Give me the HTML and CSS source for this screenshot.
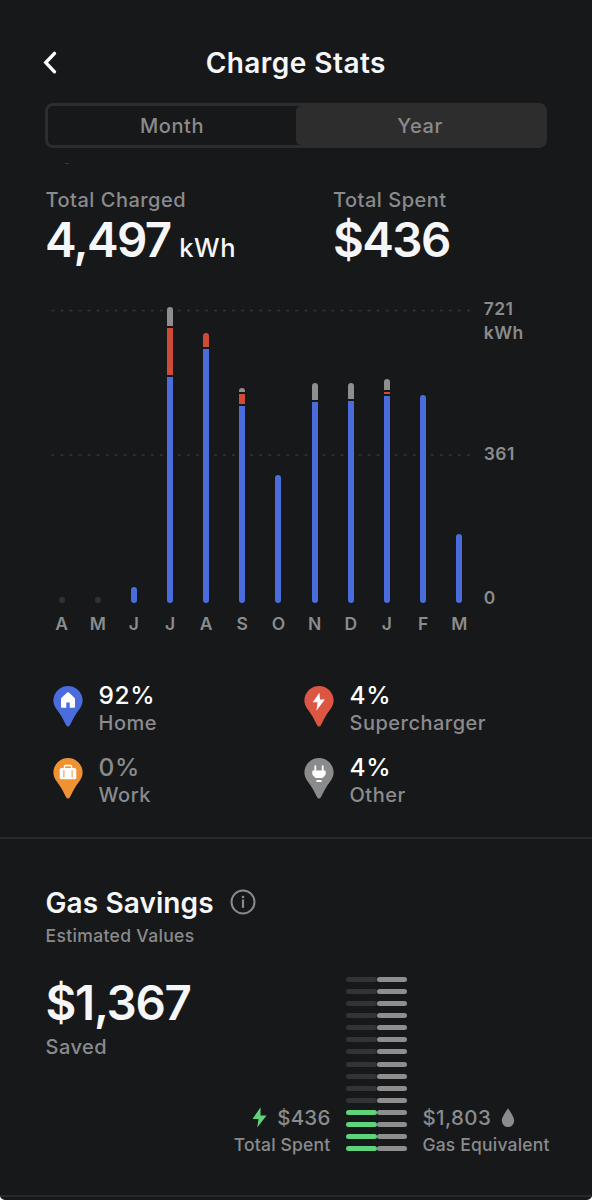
FILE: index.html
```html
<!DOCTYPE html>
<html lang="en">
<head>
<meta charset="utf-8">
<title>Charge Stats</title>
<link rel="stylesheet" href="styles.css">
</head>
<body>
<main class="screen">
  <header class="header">
    <svg class="back" width="16" height="26" viewBox="0 0 16 26"><path d="M12.5 3.400 3.800 12.600l8.700 9.200" fill="none" stroke="#fff" stroke-width="3.4" stroke-linecap="round" stroke-linejoin="miter"/></svg>
    <h1 class="title">Charge Stats</h1>
  </header>

  <nav class="segments">
    <span class="segment">Month</span>
    <span class="segment segment-active">Year</span>
  </nav>
  <div class="tick"></div>

  <section class="totals">
    <div class="total">
      <div class="label">Total Charged</div>
      <div class="value charged">4,497<span class="unit">kWh</span></div>
    </div>
    <div class="total">
      <div class="label spent-label">Total Spent</div>
      <div class="value spent">$436</div>
    </div>
  </section>

  <section class="chart">
    <div class="plot">
      <svg class="gridlines" width="422" height="150" viewBox="0 0 422 150"><path d="M.4 3.5H420M.4 148H420" stroke="#333436" stroke-width="1.6" stroke-dasharray="3 6.033"/></svg>
      <div class="bars">
        <div class="bar"><i class="dot"></i></div>
        <div class="bar"><i class="dot"></i></div>
        <div class="bar"><i class="home" style="height:16px"></i></div>
        <div class="bar"><i class="other" style="height:19px"></i><i class="super" style="height:47px"></i><i class="home" style="height:226px"></i></div>
        <div class="bar"><i class="super" style="height:14px"></i><i class="home" style="height:254px"></i></div>
        <div class="bar"><i class="other" style="height:3.5px"></i><i class="super" style="height:10.5px"></i><i class="home" style="height:197px"></i></div>
        <div class="bar"><i class="home" style="height:128.5px"></i></div>
        <div class="bar"><i class="other" style="height:17px"></i><i class="home" style="height:201px"></i></div>
        <div class="bar"><i class="other" style="height:16px"></i><i class="home" style="height:202px"></i></div>
        <div class="bar"><i class="other" style="height:10.5px"></i><i class="super" style="height:2px"></i><i class="home" style="height:207.5px"></i></div>
        <div class="bar"><i class="home" style="height:208px"></i></div>
        <div class="bar"><i class="home" style="height:69.5px"></i></div>
      </div>
      <div class="months">
        <span>A</span><span>M</span><span>J</span><span>J</span><span>A</span><span>S</span><span>O</span><span>N</span><span>D</span><span>J</span><span>F</span><span>M</span>
      </div>
    </div>
    <div class="axis">
      <span class="axis-max">721<br>kWh</span>
      <span class="axis-mid">361</span>
      <span class="axis-min">0</span>
    </div>
  </section>

  <section class="legend">
    <div class="entry">
      <svg class="pin" width="30" height="41" viewBox="0 0 30 41"><path d="M15 0a14.6 14.6 0 0 0-14.6 14.6c0 6.3 4.6 10 7.8 15.4 2.1 3.500 3.600 6.700 4.800 9.100q.7 1.500 2 1.500t2-1.500c1.200-2.400 2.700-5.600 4.800-9.100 3.200-5.400 7.800-9.100 7.800-15.400A14.600 14.600 0 0 0 15 0z" fill="#4a6cdc"/><path d="M14.100 6.600q.9-.8 1.800 0l5.500 5.100q.6.600.6 1.400v8q0 .7-.7.700h-4.600v-5.200h-3.400v5.200h-4.600q-.7 0-.7-.7v-8q0-.8.600-1.400z" fill="#fff"/></svg>
      <div><div class="percent">92%</div><div class="label">Home</div></div>
    </div>
    <div class="entry">
      <svg class="pin" width="30" height="41" viewBox="0 0 30 41"><path d="M15 0a14.6 14.6 0 0 0-14.6 14.6c0 6.3 4.6 10 7.8 15.4 2.1 3.500 3.600 6.700 4.800 9.100q.7 1.500 2 1.500t2-1.500c1.200-2.400 2.700-5.600 4.800-9.100 3.200-5.400 7.800-9.100 7.800-15.400A14.600 14.600 0 0 0 15 0z" fill="#dd5643"/><path d="M15.400 6.700 8.700 16.300h4.900l-1.300 8.500 8.600-11.200h-4.900z" fill="#fff"/></svg>
      <div><div class="percent">4%</div><div class="label supercharger">Supercharger</div></div>
    </div>
    <div class="entry">
      <svg class="pin" width="30" height="41" viewBox="0 0 30 41"><path d="M15 0a14.6 14.6 0 0 0-14.6 14.6c0 6.3 4.6 10 7.8 15.4 2.1 3.500 3.600 6.700 4.800 9.100q.7 1.500 2 1.500t2-1.500c1.200-2.400 2.700-5.600 4.800-9.100 3.200-5.400 7.800-9.100 7.800-15.400A14.600 14.600 0 0 0 15 0z" fill="#ef9233"/><rect x="6.700" y="10" width="16.600" height="11.300" rx="1.600" fill="#fff"/><path d="M11.400 10V8.700q0-1.200 1.200-1.200h4.800q1.200 0 1.200 1.200V10" fill="none" stroke="#fff" stroke-width="1.400"/><path d="M10.900 12.200v7M19.100 12.200v7" stroke="#ef9233" stroke-width="1"/></svg>
      <div><div class="percent percent-none">0%</div><div class="label">Work</div></div>
    </div>
    <div class="entry">
      <svg class="pin" width="30" height="41" viewBox="0 0 30 41"><path d="M15 0a14.6 14.6 0 0 0-14.6 14.6c0 6.3 4.6 10 7.8 15.4 2.1 3.500 3.600 6.700 4.800 9.100q.7 1.500 2 1.500t2-1.500c1.200-2.400 2.700-5.600 4.800-9.100 3.200-5.400 7.800-9.100 7.800-15.400A14.600 14.600 0 0 0 15 0z" fill="#8b8b8c"/><path d="M8.300 13.200q0-.8.800-.8h1.300V8.200q0-.9.900-.9t.9.900v4.200h5.600V8.200q0-.9.900-.9t.9.900v4.200h1.300q.8 0 .8.800v2.300q0 1.200-.8 2l-1.600 1.700q-.8.900-2 .9h-4.600q-1.200 0-2-.9l-1.600-1.700q-.8-.8-.8-2zM12.400 21.900h5.200v1.500q0 .6-.6.600h-4q-.6 0-.6-.6z" fill="#fff"/></svg>
      <div><div class="percent">4%</div><div class="label">Other</div></div>
    </div>
  </section>

  <section class="savings">
    <div class="savings-head">
      <h2 class="savings-title">Gas Savings</h2>
      <svg class="info" width="26" height="26" viewBox="0 0 26 26"><circle cx="13" cy="13" r="11.500" fill="none" stroke="#8a8b8c" stroke-width="2"/><circle cx="13" cy="8" r="1.300" fill="#8a8b8c"/><path d="M13 10.500v8.400" stroke="#8a8b8c" stroke-width="2.200"/></svg>
    </div>
    <div class="small estimated">Estimated Values</div>
    <div class="comparison">
      <div class="saved">
        <div class="value saved-value">$1,367</div>
        <div class="label">Saved</div>
      </div>
      <div class="cost cost-electric">
        <div class="amount"><svg width="15" height="21" viewBox="0 0 15 21"><path d="M8.600.3.500 12h6L5.200 20.600 14.600 8.500H8.500z" fill="#5fd27c"/></svg><span>$436</span></div>
        <div class="small">Total Spent</div>
      </div>
      <div class="stack">
        <i></i><i></i><i></i><i></i><i></i><i></i><i></i><i></i><i></i><i></i><i></i><i class="on"></i><i class="on"></i><i class="on"></i><i class="on"></i>
      </div>
      <div class="stack stack-gas">
        <i></i><i></i><i></i><i></i><i></i><i></i><i></i><i></i><i></i><i></i><i></i><i></i><i></i><i></i><i></i>
      </div>
      <div class="cost cost-gas">
        <div class="amount"><span>$1,803</span><svg width="14" height="20" viewBox="0 0 14 20"><path d="M7 .3C8.600 3 13.200 8.700 13.200 12.700a6.200 6.300 0 0 1-12.400 0C.8 8.700 5.400 3 7 .3z" fill="#8a8b8c"/></svg></div>
        <div class="small">Gas Equivalent</div>
      </div>
    </div>
  </section>
</main>
</body>
</html>
```

FILE: styles.css
```css
* {
  box-sizing: border-box;
}

body {
  margin: 0;
  background: #fff;
  font-family: Inter, "Liberation Sans", sans-serif;
  font-weight: 500;
  color: #8a8b8c;
}

i {
  display: block;
}

.screen {
  width: 592px;
  height: 1200px;
  overflow: hidden;
  background: #17181a;
  border-radius: 0 0 5px 5px;
}

.header {
  display: flex;
  align-items: center;
  height: 83px;
  padding: 43px 40px 0 41.500px;
}

.back {
  flex: none;
}

.title {
  flex: 1;
  margin: 0 18px 0 0;
  text-align: center;
  font-size: 28px;
  line-height: 40px;
  font-weight: 600;
  letter-spacing: 0.45px;
  color: #f5f6f7;
}

.segments {
  display: flex;
  width: 502px;
  height: 45px;
  margin: 20px 0 0 45px;
  border: 3px solid #2d2d2e;
  border-radius: 8px;
}

.segment {
  flex: 1;
  text-align: center;
  font-size: 20px;
  line-height: 40px;
  letter-spacing: 0.6px;
}

.segment-active {
  background: #2d2d2e;
  border-radius: 5px 0 0 5px;
}

.tick {
  width: 4px;
  height: 1px;
  margin: 15px 0 0 65px;
  background: #38393b;
}

.totals {
  display: grid;
  grid-template-columns: 287.5px 1fr;
  margin: 23px 0 0 45.5px;
}

.label {
  font-size: 20px;
  line-height: 26px;
  letter-spacing: 0.5px;
}

.value {
  height: 54px;
  font-size: 47.5px;
  line-height: 54px;
  font-weight: 600;
  letter-spacing: -1.600px;
  color: #f5f6f7;
  white-space: nowrap;
}

.charged {
  margin-left: -0.5px;
}

.unit {
  margin-left: 8.500px;
  font-size: 25.500px;
  line-height: 1;
  font-weight: 500;
  letter-spacing: 0.6px;
}

.saved-value {
  letter-spacing: -1.300px;
}

.chart {
  display: flex;
  margin: 30px 0 0 44px;
}

.plot {
  position: relative;
  width: 433.8px;
  padding-top: 10px;
}

.gridlines {
  position: absolute;
  left: 7px;
  top: 10px;
}

.bars {
  position: relative;
  display: grid;
  grid-template-columns: repeat(12, 1fr);
  height: 296px;
  margin: 0 0.5px 0 -0.5px;
}

.bar {
  display: flex;
  flex-direction: column;
  align-items: center;
  justify-content: flex-end;
  gap: 2px;
}

.bar i {
  width: 6px;
}

.bar i:first-child {
  border-top-left-radius: 3px;
  border-top-right-radius: 3px;
}

.bar i:last-child {
  border-bottom-left-radius: 3px;
  border-bottom-right-radius: 3px;
}

.home {
  background: #4a6cdc;
}

.super {
  background: #ce4c36;
}

.other {
  background: #8e8e8f;
}

.dot {
  height: 6px;
  background: #303133;
}

.months {
  display: grid;
  grid-template-columns: repeat(12, 1fr);
  margin: 9px 0.5px 0 -0.5px;
  font-size: 17.5px;
  line-height: 24px;
  font-weight: 600;
  text-align: center;
}

.axis {
  display: flex;
  flex-direction: column;
  margin-left: 6px;
  font-size: 17.5px;
  line-height: 24px;
  font-weight: 600;
  letter-spacing: 0.4px;
}

.axis-mid {
  margin-top: 97px;
}

.axis-min {
  margin-top: 120px;
}

.legend {
  display: grid;
  grid-template-columns: 251px 1fr;
  row-gap: 16.300px;
  margin: 45px 0 0 53px;
}

.entry {
  display: flex;
  gap: 15.500px;
}

.entry .label {
  line-height: 28px;
}

.pin {
  margin-top: 4.500px;
}

.percent {
  font-size: 24.500px;
  line-height: 28px;
  letter-spacing: 0.6px;
  color: #fff;
}

.percent-none {
  color: #8a8b8c;
}

.savings {
  height: 360px;
  margin-top: 27.700px;
  padding: 44px 0 0 45.500px;
  border-top: 2px solid #29292b;
  border-bottom: 2px solid #29292b;
}

.savings-head {
  display: flex;
  align-items: center;
  gap: 16.500px;
}

.savings-title {
  margin: 0;
  font-size: 28px;
  line-height: 40px;
  font-weight: 600;
  letter-spacing: 0.1px;
  color: #f5f6f7;
}

.info {
  margin-bottom: 1px;
}

.small {
  font-size: 17.500px;
  line-height: 26px;
  letter-spacing: 0.2px;
  white-space: nowrap;
}

.estimated {
  letter-spacing: 0.350px;
}

.comparison {
  display: flex;
  margin-top: 27px;
  height: 182px;
}

.saved {
  width: 155px;
}

.saved .label {
  margin-top: 4px;
}

.cost {
  align-self: flex-end;
}

.cost-electric {
  width: 130px;
  text-align: right;
}

.cost-gas {
  margin-left: 15.500px;
}

.amount {
  display: flex;
  align-items: center;
  gap: 10px;
  font-size: 20.500px;
  line-height: 28px;
  letter-spacing: 0.400px;
}

.cost-electric .amount {
  justify-content: flex-end;
  letter-spacing: 0.2px;
}

.stack {
  display: flex;
  flex-direction: column;
  justify-content: space-between;
  width: 30.300px;
  height: 173.500px;
  margin: 1.300px 0 0 15.800px;
}

.stack i {
  height: 5px;
  border-radius: 2.500px;
  background: #323335;
}

.stack .on {
  background: #5fd27c;
}

.stack-gas {
  margin-left: 0;
}

.stack-gas i {
  background: #8e8e8f;
}
```
